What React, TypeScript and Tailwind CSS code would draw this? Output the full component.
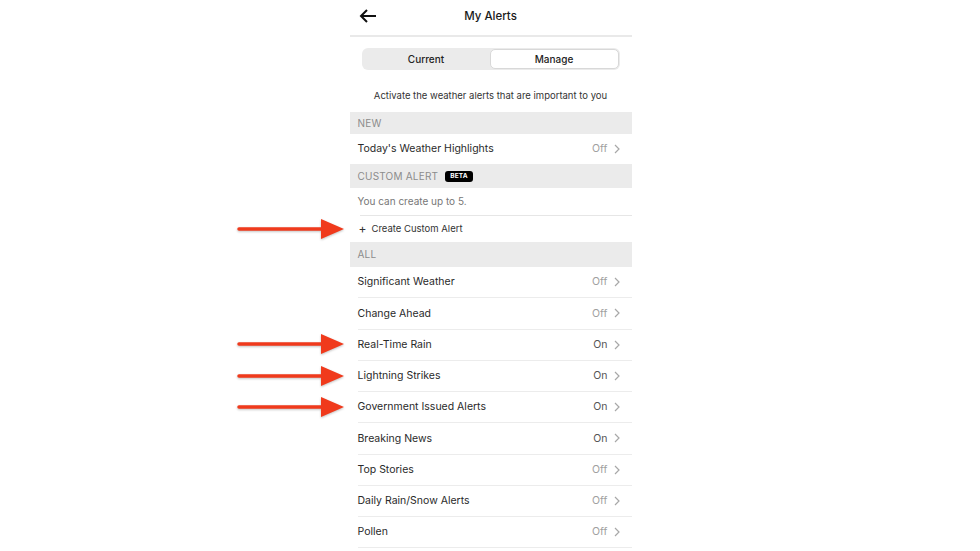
import React from "react";

const font = { fontFamily: "Inter, 'Liberation Sans', sans-serif" };

function Chevron() {
  return (
    <svg width="6" height="10" viewBox="0 0 6 10" className="ml-[6px]">
      <polyline points="1,1 5,5 1,9" fill="none" stroke="#a8a8a8" strokeWidth="1.2" />
    </svg>
  );
}

function Row({ label, value, last, h = "h-[31.25px]" }: { label: string; value: "On" | "Off"; last?: boolean; h?: string }) {
  return (
    <div className={"flex flex-col " + h}>
      <div className="flex-1 flex items-center pl-[8px] pr-[12px]">
        <span className="text-[10.5px] text-[#2a2a2a] flex-1">{label}</span>
        <span className={"text-[10.5px] " + (value === "On" ? "text-[#555555]" : "text-[#a0a0a0]")}>{value}</span>
        <Chevron />
      </div>
      {!last && <div className="ml-[8px] h-px bg-[#ececec]" />}
    </div>
  );
}

function Band({ children, h }: { children: React.ReactNode; h: string }) {
  return (
    <div className={"flex items-center pl-[8px] bg-[#ebebeb] text-[10px] tracking-[0.2px] text-[#8c8c8c] " + h}>
      {children}
    </div>
  );
}

function Arrow({ top }: { top: string }) {
  return (
    <svg
      width="110"
      height="24"
      viewBox="0 0 110 24"
      className={"absolute left-[-113px] " + top}
      style={{ filter: "drop-shadow(0 1px 1px rgba(0,0,0,0.25))" }}
    >
      <line x1="2" y1="12" x2="88" y2="12" stroke="#f03a1c" strokeWidth="3.5" strokeLinecap="round" />
      <polygon points="84,2 107,12 84,22" fill="#f03a1c" />
    </svg>
  );
}

export default function App() {
  const all: [string, "On" | "Off"][] = [
    ["Significant Weather", "Off"],
    ["Change Ahead", "Off"],
    ["Real-Time Rain", "On"],
    ["Lightning Strikes", "On"],
    ["Government Issued Alerts", "On"],
    ["Breaking News", "On"],
    ["Top Stories", "Off"],
    ["Daily Rain/Snow Alerts", "Off"],
    ["Pollen", "Off"],
  ];
  return (
    <div className="w-full h-[551px] bg-white flex justify-center overflow-hidden" style={font}>
      <div className="relative w-[282px] flex flex-col ml-[1px]">
        {/* header */}
        <div className="relative h-[35px] flex items-center justify-center">
          <svg width="18" height="14" viewBox="0 0 18 14" className="absolute left-[9px] top-[9px]">
            <line x1="2" y1="7" x2="17" y2="7" stroke="#111" strokeWidth="2" />
            <polyline points="8,1 2,7 8,13" fill="none" stroke="#111" strokeWidth="2" strokeLinejoin="miter" />
          </svg>
          <span className="text-[11.5px] font-medium text-[#1a1a1a] mt-[-2px]">My Alerts</span>
        </div>
        <div className="h-[2px] bg-[#e9e9e9]" />
        {/* segmented */}
        <div className="mt-[11px] mx-[12px] h-[22px] rounded-[6px] bg-[#ebebeb] flex p-[1px]">
          <div className="flex-1 flex items-center justify-center text-[10px] font-medium text-[#222]">Current</div>
          <div className="flex-1 flex items-center justify-center text-[10px] font-medium text-[#222] bg-white rounded-[5px] border border-[#d8d8d8]">
            Manage
          </div>
        </div>
        <div className="h-[42px] flex items-end justify-center text-[9.5px] text-[#333] pb-[9px]">
          Activate the weather alerts that are important to you
        </div>
        <Band h="h-[22px]">NEW</Band>
        <Row label="Today's Weather Highlights" value="Off" last h="h-[30px]" />
        <Band h="h-[24px]">
          CUSTOM ALERT
          <span className="ml-[7px] bg-black text-white text-[6.5px] font-bold rounded-[3px] px-[5px] h-[11px] flex items-center leading-none">
            BETA
          </span>
        </Band>
        <div className="h-[27px] flex items-center pl-[8px] text-[10px] text-[#777]">You can create up to 5.</div>
        <div className="ml-[10px] h-px bg-[#e6e6e6]" />
        <div className="h-[26px] flex items-center pl-[9px] text-[9.5px] text-[#333]">
          <span className="text-[12px] mr-[5px] leading-none text-[#333]">+</span>
          Create Custom Alert
        </div>
        <Band h="h-[25px]">ALL</Band>
        {all.map(([l, v]) => (
          <Row key={l} label={l} value={v} last={false} />
        ))}
        <Arrow top="top-[217px]" />
        <Arrow top="top-[332px]" />
        <Arrow top="top-[364px]" />
        <Arrow top="top-[395px]" />
      </div>
    </div>
  );
}
